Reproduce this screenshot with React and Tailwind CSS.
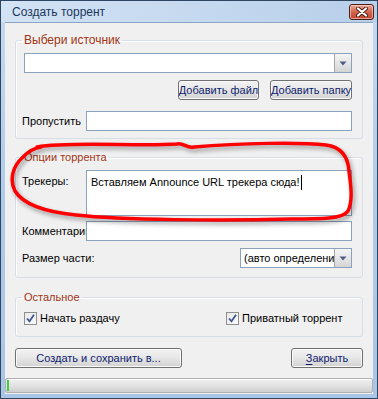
import React from "react";

function DropBtn() {
  return (
    <div className="w-[17px] h-full border-l border-[#a7a7a7] bg-gradient-to-b from-[#f4f4f4] via-[#e6e6e6] to-[#d4d4d4] flex items-center justify-center">
      <svg width="8" height="5" viewBox="0 0 8 5">
        <path d="M0.5 0.5 L7.5 0.5 L4 4.5 Z" fill="#4d5f84" />
      </svg>
    </div>
  );
}

function Btn({ children, className = "" }) {
  return (
    <div
      className={
        "h-[20px] rounded-[3px] border border-[#707070] bg-gradient-to-b from-[#f3f3f3] via-[#e6e6e6] to-[#d2d2d2] shadow-[inset_0_0_0_1px_#fbfbfb] flex items-center justify-center overflow-hidden whitespace-nowrap text-[#0e1c6e] " +
        className
      }
    >
      {children}
    </div>
  );
}

function Check({ label }) {
  return (
    <div className="flex items-center gap-[3px] whitespace-nowrap">
      <div className="w-[13px] h-[13px] border border-[#8e8f8f] bg-gradient-to-br from-[#e8e8e8] to-[#fbfbfb] flex items-center justify-center">
        <svg width="11" height="11" viewBox="0 0 11 11">
          <path d="M2 5.5 L4.5 8.3 L9 1.8" fill="none" stroke="#3f5593" strokeWidth="1.8" />
        </svg>
      </div>
      <span>{label}</span>
    </div>
  );
}

const inputCls = "bg-white border border-[#8aa2bc]";

export default function App() {
  return (
    <div className="relative w-[378px] h-[399px] flex flex-col border border-[#2f4661] bg-gradient-to-b from-[#c6daf1] via-[#b0cae9] to-[#a9c5e7] font-['Liberation_Sans',sans-serif] text-[11px] text-black overflow-hidden">
      {/* title bar */}
      <div className="h-[21px] flex items-start justify-between pl-[11px] pr-[3px] bg-gradient-to-r from-[#d3e3f5] to-[#b8cfea]">
        <span className="mt-[4px] leading-[14px] text-[12px] text-[#1c365c]">Создать торрент</span>
        <div className="mt-[3px] w-[25px] h-[16px] rounded-[3px] border border-[#4c1e17] bg-gradient-to-b from-[#e8a99a] via-[#d2644f] to-[#c0442d] shadow-[inset_0_0_0_1px_rgba(255,220,210,0.6)] flex items-center justify-center">
          <svg width="12" height="10" viewBox="0 0 12 10">
            <path d="M2 1.5 L10 8.5 M10 1.5 L2 8.5" stroke="#4a1a14" strokeWidth="4" strokeLinecap="round" />
            <path d="M2 1.5 L10 8.5 M10 1.5 L2 8.5" stroke="#ffffff" strokeWidth="2.2" strokeLinecap="round" />
          </svg>
        </div>
      </div>

      {/* content */}
      <div className="flex-1 mx-[4px] mb-[4px] bg-[#f0f0f0] border-t border-[#8da5c5] flex flex-col">
        {/* Group 1 */}
        <fieldset className="mt-[10px] mx-[10px] border border-[#d5dfe5] rounded-[3px] pl-[6px] pr-[10px] pt-[6px] pb-[7px] shadow-[inset_1px_1px_0_#ffffff]">
          <legend className="px-[2px] leading-[14px] text-[12px] text-[#a03313]">Выбери источник</legend>
          <div className={"ml-[2px] h-[20px] flex justify-end " + inputCls}>
            <DropBtn />
          </div>
          <div className="mt-[7px] flex justify-end gap-[11px]">
            <Btn className="w-[81px]">Добавить файл</Btn>
            <Btn className="w-[82px]">Добавить папку</Btn>
          </div>
          <div className="mt-[11px] flex items-center">
            <span className="w-[64px] whitespace-nowrap overflow-hidden">Пропустить</span>
            <div className={"flex-1 h-[20px] " + inputCls} />
          </div>
        </fieldset>

        {/* Group 2 */}
        <fieldset className="mt-[11px] mx-[10px] border border-[#d5dfe5] rounded-[3px] pl-[6px] pr-[10px] pt-[6px] pb-[9px] shadow-[inset_1px_1px_0_#ffffff]">
          <legend className="px-[2px] leading-[14px] text-[#a03313]">Опции торрента</legend>
          <div className="flex items-start">
            <span className="w-[64px] mt-[4px] leading-[14px] whitespace-nowrap overflow-hidden">Трекеры:</span>
            <div className={"flex-1 h-[46px] pl-[4px] pt-[4px] leading-[14px] whitespace-nowrap flex items-start " + inputCls}>
              <span>Вставляем Announce URL трекера сюда!</span>
              <span className="ml-[1px] w-[1px] h-[15px] bg-black" />
            </div>
          </div>
          <div className="mt-[5px] flex items-center">
            <span className="w-[64px] whitespace-nowrap overflow-hidden">Комментарий:</span>
            <div className={"flex-1 h-[20px] " + inputCls} />
          </div>
          <div className="mt-[7px] flex items-center justify-between">
            <span className="whitespace-nowrap">Размер части:</span>
            <div className={"w-[112px] h-[20px] flex items-stretch " + inputCls}>
              <div className="flex-1 overflow-hidden whitespace-nowrap pl-[3px] leading-[18px]">(авто определение)</div>
              <DropBtn />
            </div>
          </div>
        </fieldset>

        {/* Group 3 */}
        <fieldset className="mt-[12px] mx-[10px] border border-[#d5dfe5] rounded-[3px] pl-[8px] pr-[10px] pt-[8px] pb-[11px] shadow-[inset_1px_1px_0_#ffffff]">
          <legend className="ml-[-2px] px-[2px] leading-[14px] text-[#a03313]">Остальное</legend>
          <div className="flex items-center h-[13px]">
            <div className="w-[202px]">
              <Check label="Начать раздачу" />
            </div>
            <Check label="Приватный торрент" />
          </div>
        </fieldset>

        {/* Buttons */}
        <div className="mt-[11px] mx-[10px] flex justify-between">
          <Btn className="w-[167px]">Создать и сохранить в...</Btn>
          <Btn className="w-[72px]">
            <span className="underline underline-offset-2">З</span>акрыть
          </Btn>
        </div>

        {/* Progress bar */}
        <div className="mt-[10px] h-[15px] rounded-[2px] border border-[#b0b0b0] bg-gradient-to-b from-[#f0f0f0] via-[#e2e2e2] to-[#cfcfcf] shadow-[inset_0_1px_0_#ffffff] flex">
          <div className="w-[2px] ml-[1px] my-[1px] bg-[#3fcf3f]" />
        </div>
      </div>

      {/* red hand-drawn mark */}
      <svg className="absolute left-0 top-0 pointer-events-none drop-shadow-[2px_3px_2px_rgba(0,0,0,0.35)]" width="378" height="399" viewBox="0 0 378 399">
        <path
          d="M 36 146 C 70 140, 140 146, 176 143 C 182 141, 186 148, 193 146 C 240 142, 300 141, 325 144 C 340 146, 347 155, 348 170 C 350 185, 352 200, 347 210 C 342 218, 320 218, 290 218 C 220 220, 120 219, 75 214 C 45 211, 22 203, 14 190 C 8 178, 12 165, 22 156 C 28 150, 33 147, 40 146"
          fill="none"
          stroke="#ff0000"
          strokeWidth="3.5"
          strokeLinecap="round"
          strokeLinejoin="round"
        />
      </svg>
    </div>
  );
}
